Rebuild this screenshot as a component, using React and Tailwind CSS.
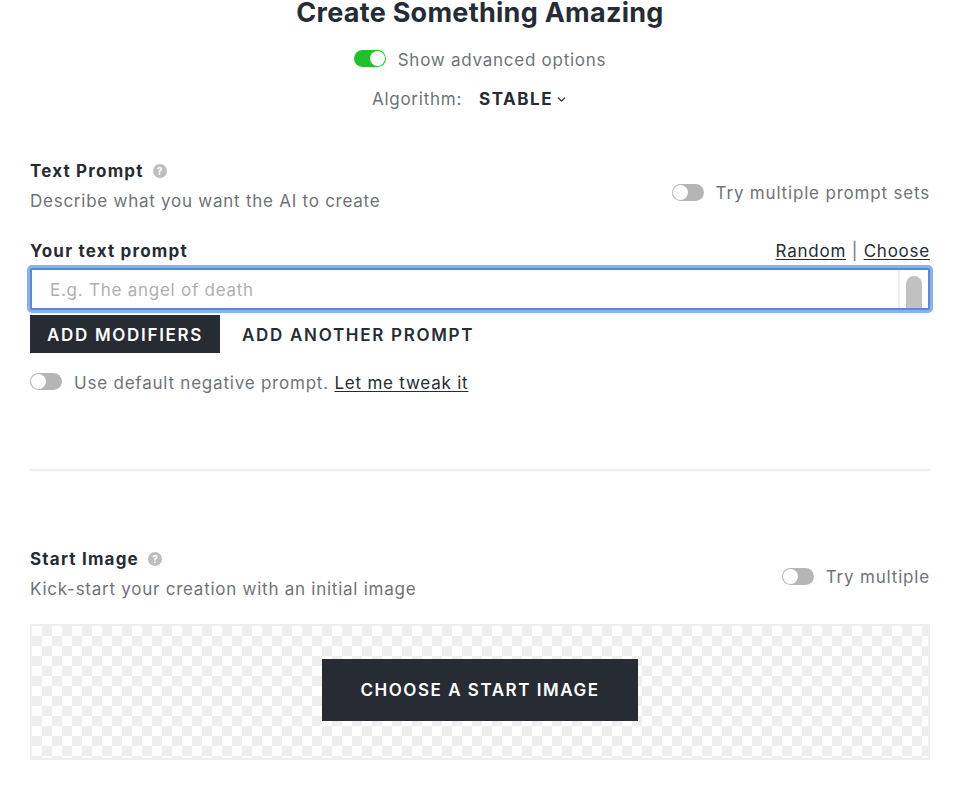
import { ChevronDown } from "lucide-react";

function Toggle({ on }) {
  return (
    <span className={`flex h-[17px] w-8 shrink-0 items-center rounded-full p-[1px] ${on ? "justify-end bg-[#1fc22c]" : "justify-start bg-[#b5b5b5]"}`}>
      <span className="h-[15px] w-[15px] rounded-full bg-white" />
    </span>
  );
}

function Help() {
  return (
    <span className="flex h-[14px] w-[14px] items-center justify-center rounded-full bg-[#bdbdbd] text-[10px] font-bold leading-none tracking-normal text-white">
      ?
    </span>
  );
}

function SectionHead({ title, desc, toggle, drop }) {
  return (
    <div className="flex items-center justify-between">
      <div>
        <div className="flex items-center gap-[9px] text-[17px] font-bold leading-[24px] tracking-[0.07em] text-[#272b33]">
          {title} <Help />
        </div>
        <div className="mt-[6px] text-[17px] leading-[24px] tracking-[0.044em] text-[#6f7377]">{desc}</div>
      </div>
      <div className={`flex items-center gap-[12px] text-[17px] tracking-[0.048em] text-[#6f7377] ${drop}`}>
        <Toggle />
        <span className="pt-[4px]">{toggle}</span>
      </div>
    </div>
  );
}

export default function App() {
  return (
    <div className="min-h-[810px] bg-white px-[26px] pl-[30px] font-['Inter',sans-serif]">
      <h1 className="text-center text-[27px] font-bold leading-[26px] tracking-[0.01em] text-[#272b33]">
        Create Something Amazing
      </h1>

      <div className="mt-[18px] flex items-center justify-center gap-[12px] text-[17px] leading-[24px] tracking-[0.044em] text-[#6f7377]">
        <Toggle on />
        <span className="pt-[4px]">Show advanced options</span>
      </div>
      <div className="mt-[15px] flex items-center justify-center pr-[20px] text-[17px] leading-[24px] tracking-[0.044em] text-[#6f7377]">
        <span>Algorithm:</span>
        <span className="ml-[17px] font-bold tracking-[0.09em] text-[#272b33]">STABLE</span>
        <ChevronDown className="ml-[2px] h-[13px] w-[13px] text-[#272b33]" strokeWidth={2.5} />
      </div>

      <div className="mt-[48px]">
        <SectionHead title="Text Prompt" desc="Describe what you want the AI to create" toggle="Try multiple prompt sets" drop="mt-[12px]" />
      </div>

      <div className="mt-[26px] flex items-end justify-between leading-[24px]">
        <span className="text-[17px] font-bold tracking-[0.07em] text-[#272b33]">Your text prompt</span>
        <span className="text-[17px] tracking-[0.045em] text-[#6f7377]">
          <a className="text-[#272b33] underline underline-offset-2">Random</a> | <a className="text-[#272b33] underline underline-offset-2">Choose</a>
        </span>
      </div>

      <div className="mt-[5px] flex h-[42px] w-[900px] items-stretch rounded-[2px] border-2 border-[#5b8ad0] bg-white shadow-[0_0_0_3px_#85b1f5]">
        <div className="flex flex-1 items-center pl-[18px] pt-[3px] text-[17px] tracking-[0.044em] text-[#b0b0b0]">E.g. The angel of death</div>
        <div className="w-[30px] overflow-hidden border-l-2 border-[#eeeeee] pl-[6px] pt-[6px]">
          <div className="h-[40px] w-4 rounded-full bg-[#c1c1c1]" />
        </div>
      </div>

      <div className="mt-[5px] flex items-center gap-[22px] text-[17px] font-semibold tracking-[0.1em]">
        <button className="h-[38px] w-[190px] bg-[#272b33] pt-[3px] text-white">ADD MODIFIERS</button>
        <button className="pt-[3px] text-[#272b33]">ADD ANOTHER PROMPT</button>
      </div>

      <div className="mt-[14px] flex items-center gap-[12px] text-[17px] leading-[24px] tracking-[0.046em] text-[#6f7377]">
        <Toggle />
        <span className="pt-[4px]">
          Use default negative prompt. <a className="text-[#272b33] underline underline-offset-2">Let me tweak it</a>
        </span>
      </div>

      <hr className="mt-[74px] w-[900px] border-t-2 border-[#eeeeee]" />

      <div className="mt-[76px] w-[900px]">
        <SectionHead title="Start Image" desc="Kick-start your creation with an initial image" toggle="Try multiple" drop="mt-[4px]" />
      </div>

      <div className="mt-[23px] flex h-[136px] w-[900px] items-center justify-center border-2 border-[#eeeeee] bg-[conic-gradient(#eeeeee_25%,#ffffff_0_50%,#eeeeee_0_75%,#ffffff_0)] bg-[size:20px_20px] pb-[4px]">
        <button className="h-[62px] w-[316px] bg-[#272b33] pt-[2px] text-[17px] font-semibold tracking-[0.09em] text-white">CHOOSE A START IMAGE</button>
      </div>
    </div>
  );
}
